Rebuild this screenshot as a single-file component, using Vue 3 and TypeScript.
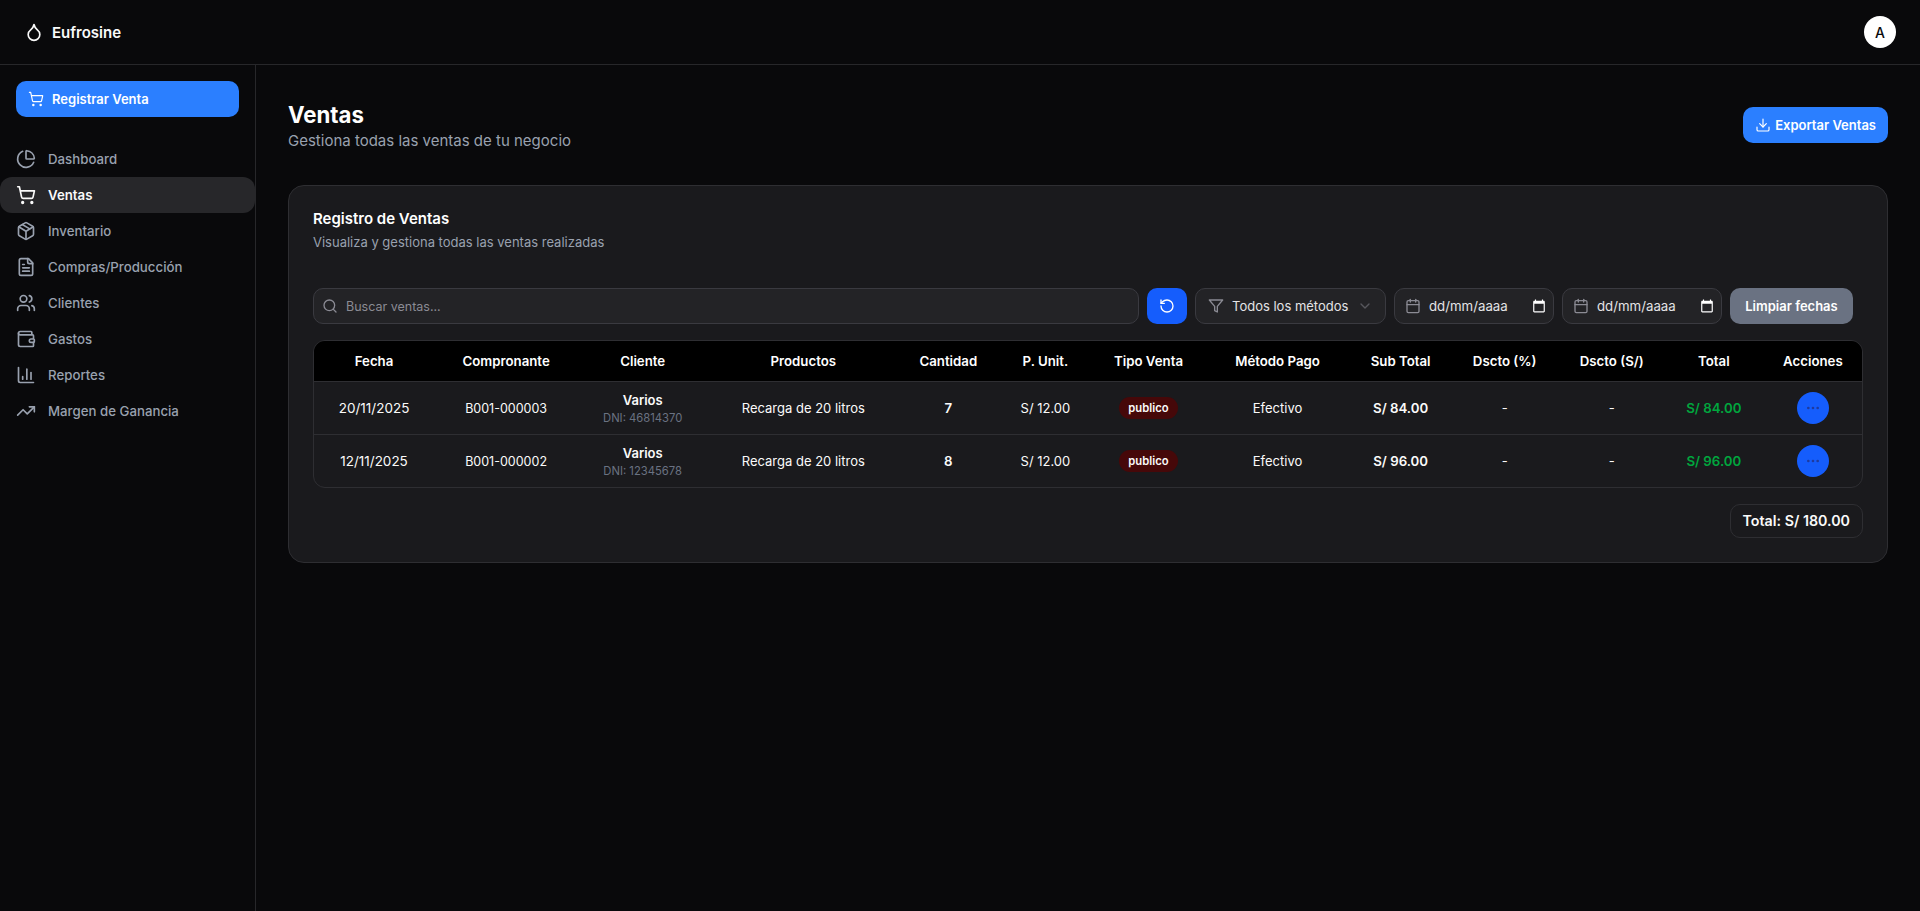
<script setup lang="ts">
interface Sale {
  date: string;
  doc: string;
  dni: string;
  qty: number;
  subtotal: string;
}

const columns = [
  { label: 'Fecha', width: 120 },
  { label: 'Compronante', width: 144 },
  { label: 'Cliente', width: 129 },
  { label: 'Productos', width: 192 },
  { label: 'Cantidad', width: 98 },
  { label: 'P. Unit.', width: 96 },
  { label: 'Tipo Venta', width: 110 },
  { label: 'Método Pago', width: 148 },
  { label: 'Sub Total', width: 98 },
  { label: 'Dscto (%)', width: 110 },
  { label: 'Dscto (S/)', width: 104 },
  { label: 'Total', width: 100 },
  { label: 'Acciones', width: 98 },
];

const sales: Sale[] = [
  { date: '20/11/2025', doc: 'B001-000003', dni: '46814370', qty: 7, subtotal: 'S/ 84.00' },
  { date: '12/11/2025', doc: 'B001-000002', dni: '12345678', qty: 8, subtotal: 'S/ 96.00' },
];

const nav = [
  { label: 'Dashboard', d: ['M21 12c.552 0 1.005-.449.95-.998a10 10 0 0 0-8.953-8.951c-.55-.055-.998.398-.998.95v8a1 1 0 0 0 1 1z', 'M21.21 15.89A10 10 0 1 1 8 2.83'] },
  { label: 'Ventas', active: true, d: ['M9 21a1 1 0 1 0-2 0 1 1 0 0 0 2 0z', 'M20 21a1 1 0 1 0-2 0 1 1 0 0 0 2 0z', 'M2.05 2.05h2l2.66 12.42a2 2 0 0 0 2 1.58h9.78a2 2 0 0 0 1.95-1.57l1.65-7.43H5.12'] },
  { label: 'Inventario', d: ['M11 21.73a2 2 0 0 0 2 0l7-4A2 2 0 0 0 21 16V8a2 2 0 0 0-1-1.73l-7-4a2 2 0 0 0-2 0l-7 4A2 2 0 0 0 3 8v8a2 2 0 0 0 1 1.73z', 'M12 22V12', 'm3.3 7 7.703 4.734a2 2 0 0 0 1.994 0L20.7 7', 'm7.5 4.27 9 5.15'] },
  { label: 'Compras/Producción', d: ['M15 2H6a2 2 0 0 0-2 2v16a2 2 0 0 0 2 2h12a2 2 0 0 0 2-2V7Z', 'M14 2v4a2 2 0 0 0 2 2h4', 'M10 9H8', 'M16 13H8', 'M16 17H8'] },
  { label: 'Clientes', d: ['M16 21v-2a4 4 0 0 0-4-4H6a4 4 0 0 0-4 4v2', 'M13 7a4 4 0 1 0-8 0 4 4 0 0 0 8 0z', 'M16 3.128a4 4 0 0 1 0 7.744', 'M22 21v-2a4 4 0 0 0-3-3.87'] },
  { label: 'Gastos', d: ['M19 7V4a1 1 0 0 0-1-1H5a2 2 0 0 0 0 4h15a1 1 0 0 1 1 1v4h-3a2 2 0 0 0 0 4h3a1 1 0 0 0 1-1v-2a1 1 0 0 0-1-1', 'M3 5v14a2 2 0 0 0 2 2h15a1 1 0 0 0 1-1v-4'] },
  { label: 'Reportes', d: ['M3 3v16a2 2 0 0 0 2 2h16', 'M18 17V9', 'M13 17V5', 'M8 17v-3'] },
  { label: 'Margen de Ganancia', d: ['M16 7h6v6', 'm22 7-8.5 8.5-5-5L2 17'] },
];

const cartIcon = nav[1].d;
</script>

<template>
  <div class="app">
    <header class="topbar">
      <div class="brand">
        <svg class="icon brand-icon" viewBox="0 0 24 24"><path d="M12 22a7 7 0 0 0 7-7c0-2-1-3.9-3-5.5s-3.5-4-4-6.5c-.5 2.5-2 4.9-4 6.5C6 11.1 5 13 5 15a7 7 0 0 0 7 7z" /></svg>
        <span>Eufrosine</span>
      </div>
      <div class="avatar">A</div>
    </header>

    <div class="body">
      <aside class="sidebar">
        <div class="sidebar-action">
          <button class="btn-primary register">
            <svg class="icon" viewBox="0 0 24 24"><path v-for="p in cartIcon" :key="p" :d="p" /></svg>
            Registrar Venta
          </button>
        </div>
        <nav class="nav">
          <a v-for="item in nav" :key="item.label" class="nav-item" :class="{ active: item.active }">
            <svg class="icon" viewBox="0 0 24 24"><path v-for="p in item.d" :key="p" :d="p" /></svg>
            {{ item.label }}
          </a>
        </nav>
      </aside>

      <main class="main">
        <div class="page-head">
          <div>
            <h1>Ventas</h1>
            <p>Gestiona todas las ventas de tu negocio</p>
          </div>
          <button class="btn-primary export">
            <svg class="icon" viewBox="0 0 24 24">
              <path d="M21 15v4a2 2 0 0 1-2 2H5a2 2 0 0 1-2-2v-4" />
              <path d="m7 10 5 5 5-5" />
              <path d="M12 15V3" />
            </svg>
            Exportar Ventas
          </button>
        </div>

        <section class="card">
          <h2>Registro de Ventas</h2>
          <p class="card-sub">Visualiza y gestiona todas las ventas realizadas</p>

          <div class="toolbar">
            <div class="field search">
              <svg class="icon" viewBox="0 0 24 24"><path d="M19 11a8 8 0 1 0-16 0 8 8 0 0 0 16 0z" /><path d="m21 21-4.3-4.3" /></svg>
              <span>Buscar ventas...</span>
            </div>
            <button class="refresh">
              <svg class="icon" viewBox="0 0 24 24"><path d="M3 12a9 9 0 1 0 9-9 9.75 9.75 0 0 0-6.74 2.74L3 8" /><path d="M3 3v5h5" /></svg>
            </button>
            <div class="field method">
              <svg class="icon" viewBox="0 0 24 24"><path d="M22 3H2l8 9.46V19l4 2v-8.54L22 3z" /></svg>
              <span>Todos los métodos</span>
              <svg class="icon chevron" viewBox="0 0 24 24"><path d="m6 9 6 6 6-6" /></svg>
            </div>
            <div v-for="n in 2" :key="n" class="field date">
              <svg class="icon" viewBox="0 0 24 24">
                <path d="M8 2v4" /><path d="M16 2v4" />
                <rect x="3" y="4" width="18" height="18" rx="2" />
                <path d="M3 10h18" />
              </svg>
              <span>dd/mm/aaaa</span>
              <svg class="picker" viewBox="0 0 24 24"><path d="M20 3h-1V1h-2v2H7V1H5v2H4c-1.1 0-2 .9-2 2v16c0 1.1.9 2 2 2h16c1.1 0 2-.9 2-2V5c0-1.1-.9-2-2-2zm0 18H4V8h16v13z" /></svg>
            </div>
            <button class="clear">Limpiar fechas</button>
          </div>

          <div class="table-wrap">
            <table>
              <colgroup>
                <col v-for="c in columns" :key="c.label" :style="{ width: c.width + 'px' }" />
              </colgroup>
              <thead>
                <tr>
                  <th v-for="c in columns" :key="c.label">{{ c.label }}</th>
                </tr>
              </thead>
              <tbody>
                <tr v-for="s in sales" :key="s.doc">
                  <td class="date-cell">{{ s.date }}</td>
                  <td class="doc-cell">{{ s.doc }}</td>
                  <td>
                    <div class="client">Varios</div>
                    <div class="dni">DNI: {{ s.dni }}</div>
                  </td>
                  <td>Recarga de 20 litros</td>
                  <td class="strong">{{ s.qty }}</td>
                  <td>S/ 12.00</td>
                  <td><span class="badge">publico</span></td>
                  <td>Efectivo</td>
                  <td class="strong">{{ s.subtotal }}</td>
                  <td>-</td>
                  <td>-</td>
                  <td class="strong green">{{ s.subtotal }}</td>
                  <td>
                    <button class="more">
                      <svg class="icon" viewBox="0 0 24 24"><path d="M13 12a1 1 0 1 0-2 0 1 1 0 0 0 2 0z" /><path d="M20 12a1 1 0 1 0-2 0 1 1 0 0 0 2 0z" /><path d="M6 12a1 1 0 1 0-2 0 1 1 0 0 0 2 0z" /></svg>
                    </button>
                  </td>
                </tr>
              </tbody>
            </table>
          </div>

          <div class="total-row">
            <div class="total-pill">Total: S/ 180.00</div>
          </div>
        </section>
      </main>
    </div>
  </div>
</template>

<style>
html, body {
  margin: 0;
  background: #09090b;
}
</style>

<style scoped>
.app {
  min-height: 911px;
  display: flex;
  flex-direction: column;
  background: #09090b;
  color: #fafafa;
  font-family: Inter, "Noto Sans", sans-serif;
  font-size: 13px;
}
.icon {
  width: 16px;
  height: 16px;
  flex: none;
  fill: none;
  stroke: currentColor;
  stroke-width: 2;
  stroke-linecap: round;
  stroke-linejoin: round;
}
button {
  font-family: inherit;
  border: none;
  cursor: pointer;
}

.topbar {
  height: 64px;
  border-bottom: 1px solid #27272a;
  display: flex;
  align-items: center;
  justify-content: space-between;
  padding: 0 24px;
}
.brand {
  display: flex;
  align-items: center;
  gap: 8px;
  font-weight: 600;
  font-size: 15px;
}
.brand-icon {
  width: 20px;
  height: 20px;
}
.avatar {
  width: 32px;
  height: 32px;
  border-radius: 50%;
  background: #fff;
  color: #09090b;
  display: flex;
  align-items: center;
  justify-content: center;
  font-size: 14px;
  font-weight: 500;
}

.body {
  flex: 1;
  display: flex;
}
.sidebar {
  width: 255px;
  flex: none;
  border-right: 1px solid #27272a;
}
.sidebar-action {
  padding: 16px;
}
.btn-primary {
  height: 36px;
  display: flex;
  align-items: center;
  gap: 8px;
  background: #2b7fff;
  color: #fff;
  font-size: 13px;
  font-weight: 600;
  border-radius: 10px;
}
.btn-primary .icon {
  stroke-width: 1.75;
}
.register {
  width: 100%;
  padding: 0 12px;
}
.nav {
  margin-top: 8px;
  display: flex;
  flex-direction: column;
}
.nav-item {
  height: 36px;
  display: flex;
  align-items: center;
  gap: 12px;
  padding: 0 16px;
  color: #99a1af;
  font-size: 13.25px;
  font-weight: 500;
  border-radius: 12px;
}
.nav-item .icon {
  width: 20px;
  height: 20px;
}
.nav-item.active {
  background: #27272a;
  color: #fafafa;
  font-weight: 600;
}

.main {
  flex: 1;
  padding: 34px 32px 32px;
}
.page-head {
  display: flex;
  justify-content: space-between;
  align-items: center;
  margin-bottom: 34px;
}
h1 {
  margin: 0;
  font-size: 22.25px;
  line-height: 32px;
  font-weight: 700;
  color: #fff;
}
.page-head p {
  margin: 0;
  font-size: 15px;
  line-height: 20px;
  color: #99a1af;
}
.export {
  padding: 0 12px;
  gap: 4px;
}

.card {
  background: #1a1a1d;
  border: 1px solid #2e2e32;
  border-radius: 16px;
  padding: 21px 24px 24px;
}
h2 {
  margin: 0;
  font-size: 15px;
  line-height: 24px;
  font-weight: 600;
  color: #fff;
}
.card-sub {
  margin: 1px 0 0;
  font-size: 13px;
  line-height: 20px;
  color: #99a1af;
}

.toolbar {
  margin-top: 36px;
  display: flex;
  gap: 8px;
  padding-right: 10px;
}
.field {
  height: 36px;
  box-sizing: border-box;
  display: flex;
  align-items: center;
  gap: 8px;
  padding: 0 10px;
  background: #232326;
  border: 1px solid #3a3a40;
  border-radius: 10px;
  color: #e4e4e7;
  font-size: 13.25px;
  white-space: nowrap;
}
.field > .icon {
  color: #8b8b94;
}
.search {
  flex: 1;
  padding: 0 8px;
  color: #8b8b94;
  font-size: 12.5px;
}
.method {
  width: 191px;
  flex: none;
  padding: 0 12px;
  font-size: 13px;
}
.method .chevron {
  margin-left: auto;
  opacity: 0.5;
}
.date {
  width: 160px;
  flex: none;
}
.picker {
  width: 14px;
  height: 14px;
  margin-left: auto;
  margin-right: -3px;
  fill: #fff;
}
.refresh {
  width: 40px;
  height: 36px;
  flex: none;
  background: #155dfc;
  color: #fff;
  border-radius: 10px;
  display: flex;
  align-items: center;
  justify-content: center;
}
.clear {
  width: 123px;
  height: 36px;
  flex: none;
  background: #6a7282;
  color: #fff;
  font-size: 13px;
  font-weight: 600;
  border-radius: 10px;
}

.table-wrap {
  margin-top: 16px;
  border: 1px solid #2e2e32;
  border-radius: 12px;
  overflow: hidden;
}
table {
  width: 100%;
  table-layout: fixed;
  border-collapse: collapse;
  text-align: center;
  font-size: 13px;
}
th {
  height: 40px;
  background: #000;
  color: #fff;
  font-size: 13.25px;
  font-weight: 600;
  padding: 0;
  border-bottom: 1px solid #2e2e32;
}
td {
  height: 52px;
  padding: 0;
  color: #fafafa;
  border-bottom: 1px solid #2e2e32;
}
tbody tr:last-child td {
  border-bottom: none;
}
.date-cell {
  font-size: 13.5px;
}
.doc-cell {
  font-size: 12.5px;
}
.strong {
  font-weight: 600;
  font-size: 13.25px;
}
.green {
  color: #00a63e;
}
.client {
  font-weight: 600;
  line-height: 20px;
}
.dni {
  font-size: 11.25px;
  line-height: 16px;
  color: #6a7282;
}
.badge {
  display: inline-block;
  padding: 2px 9px;
  border-radius: 999px;
  background: #460809;
  font-size: 11.25px;
  font-weight: 600;
  line-height: 18px;
}
.more {
  width: 32px;
  height: 32px;
  border-radius: 50%;
  background: #155dfc;
  color: #1e3a9e;
  display: inline-flex;
  align-items: center;
  justify-content: center;
  vertical-align: middle;
}

.total-row {
  margin-top: 16px;
  display: flex;
  justify-content: flex-end;
}
.total-pill {
  padding: 6px 12px;
  border: 1px solid #2e2e32;
  border-radius: 10px;
  font-size: 14.25px;
  line-height: 20px;
  font-weight: 600;
}
</style>
